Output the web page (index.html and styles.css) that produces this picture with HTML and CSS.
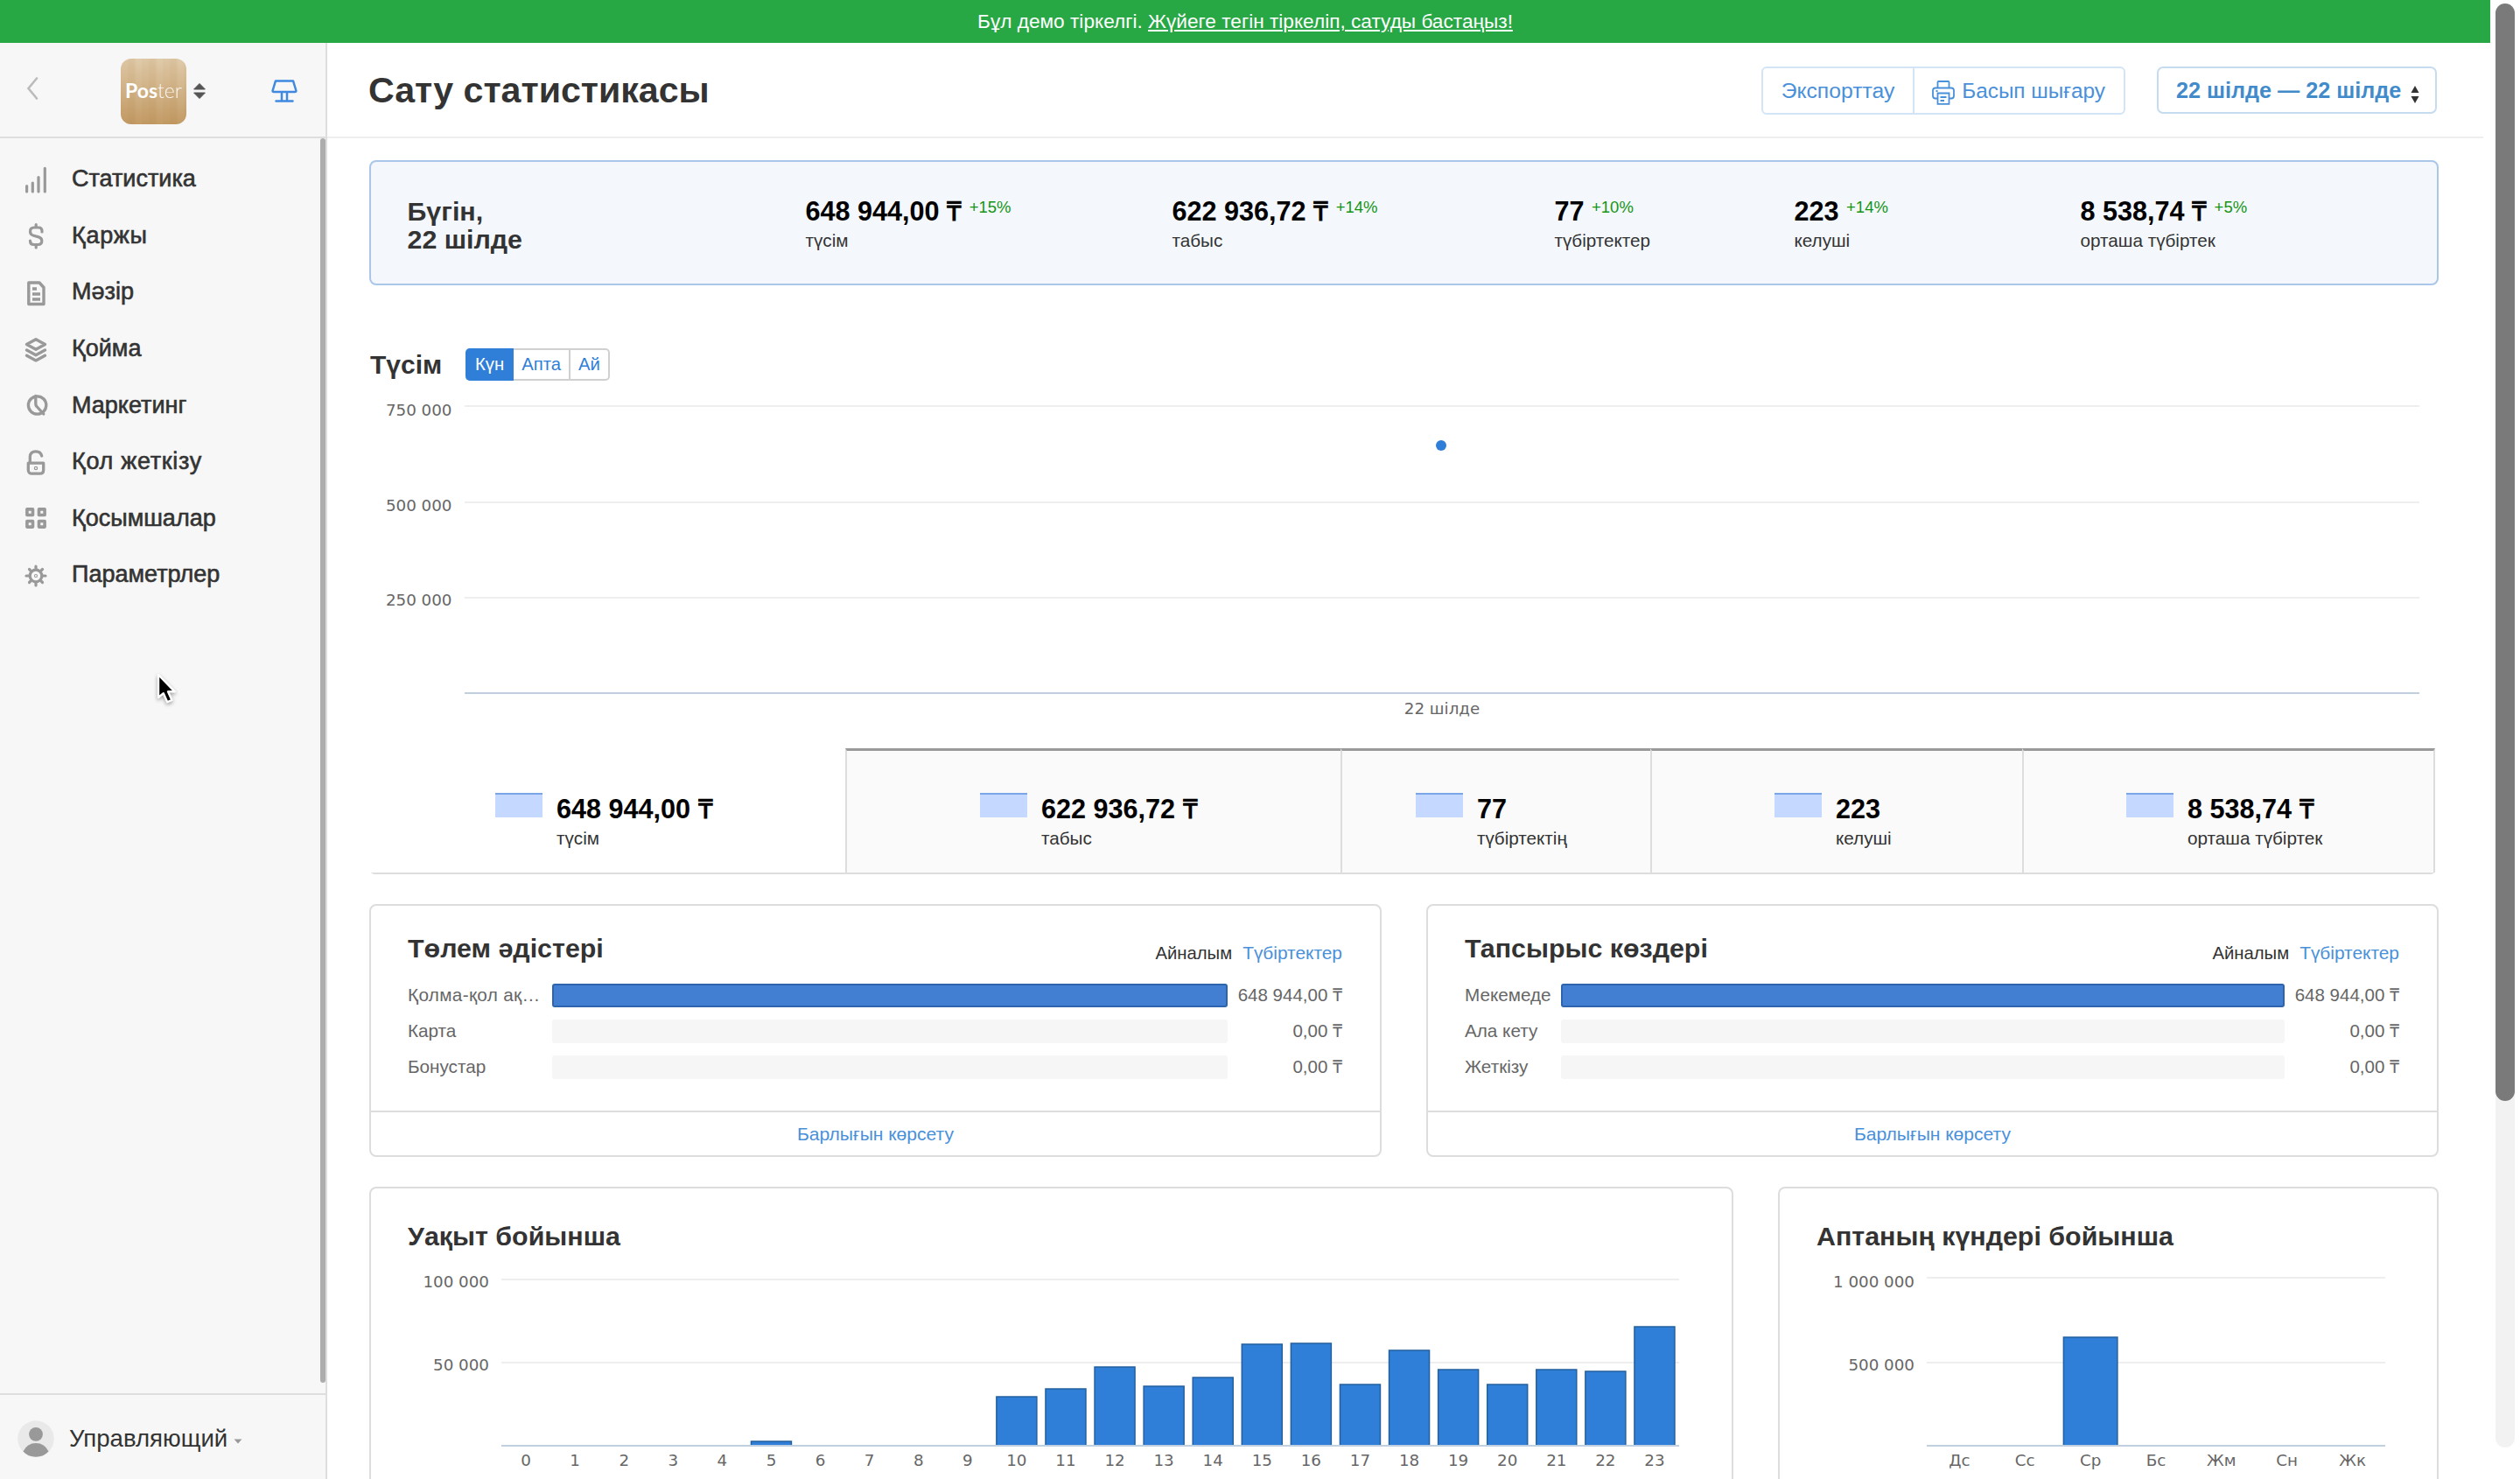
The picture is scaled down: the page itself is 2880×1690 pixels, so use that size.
FILE: index.html
```
<!DOCTYPE html>
<html lang="kk">
<head>
    <meta charset="UTF-8">
    <meta name="viewport" content="width=device-width, initial-scale=1.0">
    <title>Сату статистикасы</title>
    <link rel="stylesheet" href="styles.css">
</head>
<body>
    <div class="page">
        <!-- Demo banner -->
        <div class="demo-banner">Бұл демо тіркелгі. <a href="#">Жүйеге тегін тіркеліп, сатуды бастаңыз!</a></div>

        <div class="app">
            <!-- Sidebar -->
            <aside class="sidebar">
                <div class="sidebar-header">
                    <svg class="back" viewBox="0 0 14 26"><path d="M12 1.5 L2.5 13 L12 24.5" fill="none" stroke="#bbb" stroke-width="2.6" stroke-linecap="round"/></svg>
                    <div class="account">
                        <div class="logo"><b>Pos</b><span>ter</span></div>
                        <svg class="sorter" viewBox="0 0 14 18"><path d="M7 0.5 L13.4 7 H0.6 Z M7 17.5 L13.4 11 H0.6 Z" fill="#555" stroke="#555" stroke-width="1" stroke-linejoin="round"/></svg>
                    </div>
                    <svg class="pos-icon" viewBox="0 0 30 26" fill="none" stroke="#3f8ae0" stroke-width="2.5" stroke-linejoin="round" stroke-linecap="round">
                        <path d="M5 1.4 H25 L28.4 12.5 Q28.6 14 27 14 H3 Q1.4 14 1.6 12.5 Z"/>
                        <path d="M12 14.5 V24 M18 14.5 V24 M5.5 24.4 H24.5"/>
                    </svg>
                </div>

                <div class="sidebar-body">
                    <nav class="menu">
                        <a href="#" class="menu-item">
                            <svg viewBox="0 0 30 32" stroke-width="3.2" stroke-linecap="round"><path d="M4.6 23.5 V30 M11.3 20 V30 M18 13.5 V30 M25.3 3.3 V30"/></svg>
                            Статистика
                        </a>
                        <a href="#" class="menu-item wide">
                            <svg viewBox="0 0 30 32" stroke-width="3.2" stroke-linecap="round"><path d="M22 12 V11 Q22 7 18 7 H13 Q8.5 7 8.5 11.5 Q8.5 15.2 12.5 16.2 L17.5 17.6 Q21.8 18.8 21.8 22.3 Q21.8 26.5 17.5 26.5 H12.5 Q8.5 26.5 8.5 22.5 V22 M15.2 3.5 V6 M15.2 27 V30"/></svg>
                            Қаржы
                        </a>
                        <a href="#" class="menu-item">
                            <svg viewBox="0 0 30 32" stroke-width="3.4" stroke-linejoin="round"><path d="M6.8 5 H19 L24 10.5 V29.5 H6.8 Z M11 12 H16 M11 18 H20 M11 24 H20"/></svg>
                            Мәзір
                        </a>
                        <a href="#" class="menu-item">
                            <svg viewBox="0 0 30 32" stroke-width="3.4" stroke-linejoin="round" stroke-linecap="round"><path d="M15 4.8 L25.5 10.5 L15 16.2 L4.5 10.5 Z M4.5 17 L15 22.7 L25.5 17 M4.5 23.2 L15 28.9 L25.5 23.2"/></svg>
                            Қойма
                        </a>
                        <a href="#" class="menu-item">
                            <svg viewBox="0 0 30 32" stroke-width="3.3" stroke-linejoin="round" stroke-linecap="round"><circle cx="16.6" cy="16" r="10.2"/><path d="M14.8 5.5 V14.5 Q14.8 16.3 16 17.5 L23.8 26"/></svg>
                            Маркетинг
                        </a>
                        <a href="#" class="menu-item wide">
                            <svg viewBox="0 0 30 32" stroke-width="3.3" stroke-linejoin="round" stroke-linecap="round"><path d="M6.3 17.2 H23.7 V25 Q23.7 29.2 19.5 29.2 H10.5 Q6.3 29.2 6.3 25 Z M8.3 17 V10 Q8.3 3.8 15 3.8 Q20.5 3.8 21.7 9"/><circle cx="15" cy="23" r="0.6"/></svg>
                            Қол жеткізу
                        </a>
                        <a href="#" class="menu-item">
                            <svg viewBox="0 0 30 32" stroke-width="3.6" stroke-linejoin="round"><path d="M4.9 5.9 H11.5 V12.5 H4.9 Z M18.5 5.9 H25.1 V12.5 H18.5 Z M4.9 19.5 H11.5 V26.1 H4.9 Z M18.5 19.5 H25.1 V26.1 H18.5 Z"/></svg>
                            Қосымшалар
                        </a>
                        <a href="#" class="menu-item">
                            <svg viewBox="0 0 30 32" stroke-width="3.2" stroke-linecap="round"><circle cx="15" cy="17" r="6.8"/><circle cx="15" cy="17" r="0.5"/><path d="M15 9 V6 M15 25 V28 M7 17 H4 M23 17 H26 M9.3 11.3 L7.5 9.5 M20.7 11.3 L22.5 9.5 M9.3 22.7 L7.5 24.5 M20.7 22.7 L22.5 24.5"/></svg>
                            Параметрлер
                        </a>
                    </nav>
                    <div class="menu-scroll"></div>
                </div>

                <div class="user">
                    <svg class="avatar" viewBox="0 0 42 42"><circle cx="21" cy="21" r="20.7" fill="#e9e9e9"/><circle cx="21" cy="15.8" r="7.9" fill="#999"/><path d="M6.5 35.5 Q11 26 21 26 Q31 26 35.5 35.5 Q30 41.7 21 41.7 Q12 41.7 6.5 35.5 Z" fill="#999"/></svg>
                    <span>Управляющий</span>
                    <svg class="caret" viewBox="0 0 10 6"><path d="M0.5 0.5 H9.5 L5 5.5 Z" fill="#999"/></svg>
                </div>
            </aside>

            <main class="main">
                <!-- Top bar -->
                <header class="topbar">
                    <h1>Сату статистикасы</h1>
                    <div class="btn-group">
                        <a href="#" class="btn">Экспорттау</a>
                        <a href="#" class="btn btn-print">
                            <svg viewBox="0 0 26 28" fill="none" stroke="#4a90d9" stroke-width="1.8"><path d="M6.5 8.5 V2 Q6.5 1 7.5 1 H18.5 Q19.5 1 19.5 2 V8.5 M6 20.5 H4 Q1 20.5 1 17.5 V11.5 Q1 8.5 4 8.5 H22 Q25 8.5 25 11.5 V17.5 Q25 20.5 22 20.5 H20 M6.5 14.5 H19.5 V26.8 H6.5 Z M9.5 19 H16.5 M9.5 23 H14 M4.5 12 H6.5"/></svg>
                            Басып шығару
                        </a>
                    </div>
                    <a href="#" class="period">
                        22 шілде — 22 шілде
                        <svg viewBox="0 0 10 20"><path d="M5 0 L9.5 8 H0.5 Z M5 20 L9.5 12 H0.5 Z" fill="#333"/></svg>
                    </a>
                </header>

                <div class="content">
                    <!-- Today summary -->
                    <section class="summary">
                        <h2>Бүгін,<br>22 шілде</h2>
                        <div><b>648 944,00 ₸ <sup>+15%</sup></b><p>түсім</p></div>
                        <div><b>622 936,72 ₸ <sup>+14%</sup></b><p>табыс</p></div>
                        <div><b>77 <sup>+10%</sup></b><p>түбіртектер</p></div>
                        <div><b>223 <sup>+14%</sup></b><p>келуші</p></div>
                        <div><b>8 538,74 ₸ <sup>+5%</sup></b><p>орташа түбіртек</p></div>
                    </section>

                    <!-- Revenue chart -->
                    <div class="chart-header">
                        <h2>Түсім</h2>
                        <div class="switch">
                            <a href="#" class="active">Күн</a>
                            <a href="#">Апта</a>
                            <a href="#">Ай</a>
                        </div>
                    </div>
                    <svg class="chart chart-main" viewBox="0 0 2364 420">
                        <path class="grid" d="M109 29 H2343 M109 139 H2343 M109 248 H2343"/>
                        <path class="axis" d="M109 357 H2343"/>
                        <g text-anchor="end">
                            <text x="94.5" y="40">750 000</text>
                            <text x="94.5" y="149">500 000</text>
                            <text x="94.5" y="257">250 000</text>
                        </g>
                        <text x="1226" y="381" text-anchor="middle">22 шілде</text>
                        <circle cx="1225" cy="74" r="6" fill="#2f7ed8"/>
                    </svg>

                    <!-- Metric tabs -->
                    <section class="tabs">
                        <div class="tab active"><i></i><div><b>648 944,00 ₸</b><p>түсім</p></div></div>
                        <div class="tab"><i></i><div><b>622 936,72 ₸</b><p>табыс</p></div></div>
                        <div class="tab"><i></i><div><b>77</b><p>түбіртектің</p></div></div>
                        <div class="tab"><i></i><div><b>223</b><p>келуші</p></div></div>
                        <div class="tab"><i></i><div><b>8 538,74 ₸</b><p>орташа түбіртек</p></div></div>
                    </section>

                    <!-- Payment methods and order sources -->
                    <div class="row row-halves">
                        <section class="card payments">
                            <div class="card-header">
                                <h2>Төлем әдістері</h2>
                                <div class="card-links"><span>Айналым</span><a href="#">Түбіртектер</a></div>
                            </div>
                            <div class="bars">
                                <span class="cut">Қолма-қол ақ…</span><div class="bar full"></div><em>648 944,00 ₸</em>
                                <span>Карта</span><div class="bar"></div><em>0,00 ₸</em>
                                <span>Бонустар</span><div class="bar"></div><em>0,00 ₸</em>
                            </div>
                            <a href="#" class="card-footer">Барлығын көрсету</a>
                        </section>
                        <section class="card sources">
                            <div class="card-header">
                                <h2>Тапсырыс көздері</h2>
                                <div class="card-links"><span>Айналым</span><a href="#">Түбіртектер</a></div>
                            </div>
                            <div class="bars">
                                <span>Мекемеде</span><div class="bar full"></div><em>648 944,00 ₸</em>
                                <span>Ала кету</span><div class="bar"></div><em>0,00 ₸</em>
                                <span>Жеткізу</span><div class="bar"></div><em>0,00 ₸</em>
                            </div>
                            <a href="#" class="card-footer">Барлығын көрсету</a>
                        </section>
                    </div>

                    <!-- By hour and by weekday -->
                    <div class="row row-charts">
                        <section class="card">
                            <h2>Уақыт бойынша</h2>
                            <svg class="chart" id="hours" width="1470" height="270">
                                <path class="grid" d="M107 32 H1453 M107 127 H1453"/>
                                <text x="93" y="41" text-anchor="end">100 000</text>
                                <text x="93" y="136" text-anchor="end">50 000</text>
                            </svg>
                        </section>
                        <section class="card">
                            <h2>Аптаның күндері бойынша</h2>
                            <svg class="chart" id="days" width="660" height="270">
                                <path class="grid" d="M126 30 H650 M126 127 H650"/>
                                <text x="112" y="41" text-anchor="end">1 000 000</text>
                                <text x="112" y="136" text-anchor="end">500 000</text>
                            </svg>
                        </section>
                    </div>
                </div>
            </main>
        </div>
    </div>

    <div class="scrollbar"><div class="thumb"></div></div>

    <svg class="cursor" viewBox="0 0 28 40"><path d="M3 3 V29 L8.8 24.2 L13.2 34.2 L18.4 32 L14 22.3 H21.8 Z" fill="#000" stroke="#fff" stroke-width="2.4" stroke-linejoin="round"/></svg>

    <script>
        const SVG = "http://www.w3.org/2000/svg";

        function add(svg, tag, attrs, text) {
            const el = document.createElementNS(SVG, tag);
            for (const key in attrs) el.setAttribute(key, attrs[key]);
            if (text !== undefined) el.textContent = text;
            svg.appendChild(el);
        }

        // Draw columns, bottom axis and category labels
        function drawColumns(id, labels, heights, left, right, barWidth) {
            const svg = document.getElementById(id);
            const slot = (right - left) / labels.length;
            labels.forEach((label, i) => {
                const center = left + slot * (i + 0.5);
                if (heights[i]) {
                    add(svg, "rect", { class: "column", x: center - barWidth / 2 + 0.75, y: 222 - heights[i], width: barWidth - 1.5, height: heights[i] });
                }
                add(svg, "text", { x: center, y: 245, "text-anchor": "middle" }, label);
            });
            add(svg, "path", { class: "axis", d: "M" + left + " 222 H" + right });
        }

        drawColumns("hours", [...Array(24).keys()],
            [0, 0, 0, 0, 0, 5, 0, 0, 0, 0, 56, 65, 90, 68, 78, 116, 117, 70, 109, 87, 70, 87, 85, 136],
            107, 1453, 47.5);
        drawColumns("days", ["Дс", "Сс", "Ср", "Бс", "Жм", "Сн", "Жк"], [0, 0, 124, 0, 0, 0, 0], 126, 650, 63);
    </script>
</body>
</html>
```
FILE: styles.css
```
/* General */
* {
    box-sizing: border-box;
}

body {
    margin: 0;
    height: 1690px;
    display: flex;
    overflow: hidden;
    background: #fff;
    color: #333;
    font-family: "Liberation Sans", Arial, sans-serif;
    font-size: 20.7px;
}

a {
    color: #4a90d9;
    text-decoration: none;
}

h1, h2, p {
    margin: 0;
}

h2 {
    font-size: 30.4px;
    line-height: 36px;
}

.page {
    width: 2852px;
    flex: none;
}

/* Demo banner */
.demo-banner {
    width: 2846px;
    height: 49px;
    background: #28a745;
    color: #fff;
    font-size: 22.65px;
    line-height: 49px;
    text-align: center;
}

.demo-banner a {
    color: #fff;
    text-decoration: underline;
}

.app {
    display: flex;
    height: 1641px;
}

/* Sidebar */
.sidebar {
    width: 374px;
    flex: none;
    display: flex;
    flex-direction: column;
    background: #f7f7f7;
    border-right: 2px solid #dedede;
}

.sidebar-header {
    height: 109px;
    padding: 0 32px 0 30px;
    display: flex;
    align-items: center;
    justify-content: space-between;
    border-bottom: 2px solid #dedede;
}

.back {
    width: 14px;
    height: 26px;
    margin-top: -3px;
}

.account {
    display: flex;
    align-items: center;
    gap: 8px;
    margin-top: 3px;
    margin-right: -19px;
}

.logo {
    width: 75px;
    height: 75px;
    border-radius: 12px;
    background:
        linear-gradient(rgba(225, 206, 175, 0.75), rgba(190, 148, 92, 0.85)),
        repeating-linear-gradient(90deg, #d2b184 0 7px, #c6a171 9px 15px, #dcc29b 18px 24px);
    color: #fff;
    font-family: Lato, sans-serif;
    font-size: 23px;
    line-height: 72px;
    text-align: center;
}

.logo span {
    font-weight: 300;
    opacity: 0.9;
}

.sorter {
    width: 14px;
    height: 18px;
}

.pos-icon {
    width: 30px;
    height: 26px;
    margin-top: 3px;
}

.sidebar-body {
    flex: 1;
    display: flex;
}

.menu {
    flex: 1;
    padding: 14.5px 0 0 26px;
}

.menu-item {
    display: flex;
    align-items: center;
    gap: 26px;
    height: 64.6px;
    color: #333;
    font-size: 27px;
    -webkit-text-stroke: 0.6px #333;
}

.menu-item.wide {
    letter-spacing: 0.7px;
}

.menu-item svg {
    width: 30px;
    height: 32px;
    fill: none;
    stroke: #999;
}

.menu-scroll {
    width: 6px;
    margin-bottom: 12px;
    border-radius: 3px;
    background: #adadad;
}

.user {
    height: 98px;
    padding: 4px 0 0 20px;
    display: flex;
    align-items: center;
    border-top: 2px solid #dedede;
    font-size: 27.6px;
}

.avatar {
    width: 42px;
    height: 42px;
    margin-right: 17px;
}

.caret {
    width: 10px;
    height: 6px;
    margin: 5px 0 0 7px;
}

/* Top bar */
.main {
    width: 2478px;
}

.topbar {
    width: 2464px;
    height: 109px;
    padding: 0 53px 0 47px;
    display: flex;
    align-items: center;
    border-bottom: 2px solid #eee;
}

.topbar h1 {
    flex: 1;
    font-size: 41.15px;
    line-height: 48px;
}

.btn-group {
    display: flex;
    height: 55px;
    margin: 2px 36px 0 0;
    border: 2px solid #d3e4f6;
    border-radius: 6px;
}

.btn {
    padding: 0 20.5px;
    font-size: 24.7px;
    line-height: 52px;
}

.btn-print {
    display: flex;
    align-items: center;
    padding-right: 21px;
    border-left: 2px solid #d3e4f6;
    font-size: 24.3px;
}

.btn-print svg {
    width: 26px;
    height: 28px;
    margin-top: 4px;
    margin-right: 8px;
}

.period {
    display: flex;
    align-items: center;
    justify-content: space-between;
    width: 320px;
    height: 54px;
    padding: 1px 18px 0 20px;
    border: 2px solid #c5dcf0;
    border-radius: 7px;
    color: #428bca;
    font-size: 25.2px;
    font-weight: bold;
}

.period svg {
    width: 10px;
    height: 20px;
    margin-top: 9px;
}

.content {
    width: 2365px;
    margin: 25px 0 0 48px;
}

/* Today summary */
.summary {
    display: grid;
    grid-template-columns: 455px 419px 437px 274px 327px 1fr;
    height: 143px;
    padding: 40px 0 0 41.5px;
    border: 2px solid #aac6e8;
    border-radius: 8px;
    background: #f4f8fd;
}

.summary h2 {
    line-height: 32px;
}

.summary b,
.tab b {
    display: block;
    height: 32px;
    color: #000;
    font-size: 30.6px;
    line-height: 32px;
}

.summary sup {
    color: #149414;
    font-size: 18.5px;
    font-weight: normal;
    line-height: 18px;
    vertical-align: 9px;
}

.summary p,
.tab p {
    margin-top: 6px;
    line-height: 24px;
}

/* Revenue chart */
.chart-header {
    display: flex;
    height: 37px;
    margin-top: 72px;
    padding-left: 1px;
}

.chart-header h2 {
    width: 109px;
    font-size: 30px;
    line-height: 37px;
}

.switch {
    display: flex;
    border: 2px solid #d0d0d0;
    border-left: none;
    border-radius: 5px;
}

.switch a {
    padding: 0 9px;
    color: #2f7ed8;
    font-size: 20.3px;
    line-height: 33px;
}

.switch a + a + a {
    border-left: 2px solid #d0d0d0;
}

.switch .active {
    margin: -2px 0;
    padding: 0 11px;
    border-radius: 5px 0 0 5px;
    background: #2f7ed8;
    color: #fff;
    line-height: 37px;
}

.chart {
    display: block;
}

.chart-main {
    width: 2364px;
    height: 420px;
}

.chart text {
    fill: #666;
    font-family: "DejaVu Sans", sans-serif;
    font-size: 18.3px;
}

.grid {
    stroke: #eee;
    stroke-width: 2;
}

.axis {
    stroke: #c0d0e0;
    stroke-width: 2;
}

.column {
    fill: #2f7ed8;
    stroke: #23609f;
    stroke-width: 1.5;
}

/* Metric tabs */
.tabs {
    display: grid;
    grid-template-columns: 543px 566px 354px 425px 1fr;
    width: 2360px;
    height: 144px;
    margin-left: 1px;
    border-bottom: 2px solid #ddd;
    border-radius: 0 0 5px 5px;
}

.tab {
    display: flex;
    border-top: 3px solid #999;
    border-left: 2px solid #ddd;
    background: #fafafa;
}

.tab.active {
    border-color: transparent;
    background: #fff;
}

.tab:last-child {
    border-right: 2px solid #ddd;
}

.tab i {
    width: 54px;
    height: 28px;
    margin: 48px 16px 0 141px;
    border-top: 2px solid #7aa6e8;
    background: #c5d8ff;
}

.tab:nth-child(2) i {
    margin-left: 152px;
}

.tab:nth-child(3) i {
    margin-left: 84px;
}

.tab:nth-child(4) i {
    margin-left: 140px;
}

.tab:nth-child(5) i {
    margin-left: 117px;
}

.tab b {
    margin-top: 50px;
}

.tab p {
    margin-top: 6px;
}

/* Cards */
.row {
    display: grid;
    gap: 51px;
    margin-top: 34px;
}

.row-halves {
    grid-template-columns: 1157px 1157px;
}

.row-charts {
    grid-template-columns: 1559px 755px;
}

.card {
    border: 2px solid #ddd;
    border-radius: 8px;
}

.row-halves .card {
    height: 289px;
    padding-top: 30px;
    display: flex;
    flex-direction: column;
}

.row-charts .card {
    height: 380px;
    padding: 36px 0 0 42px;
}

.card-header {
    display: flex;
    justify-content: space-between;
    padding: 0 43px 0 42px;
}

.card-links {
    display: flex;
    gap: 12px;
    margin-top: 6px;
    line-height: 36px;
}

.card-links span {
    font-size: 20.3px;
}

.card-links a {
    font-size: 20.9px;
}

.bars {
    display: grid;
    grid-template-columns: 165px 772px 1fr;
    grid-auto-rows: 27px;
    row-gap: 14px;
    flex: 1;
    padding: 17px 43px 0 42px;
    color: #666;
    line-height: 26px;
}

.sources .bars {
    grid-template-columns: 110px 827px 1fr;
}

.cut {
    letter-spacing: 0.35px;
}

.bars em {
    font-size: 20.5px;
    font-style: normal;
    text-align: right;
}

.bar {
    border-radius: 3px;
    background: #f6f6f6;
}

.bar.full {
    border: 2px solid #2d64ab;
    background: #427fd3;
}

.card-footer {
    height: 51px;
    border-top: 2px solid #ddd;
    font-size: 21.1px;
    line-height: 50px;
    text-align: center;
}

/* Page scrollbar */
.scrollbar {
    width: 22px;
    height: 1650px;
    margin-top: 4px;
    border-radius: 11px;
    background: #f2f2f2;
}

.thumb {
    height: 1254px;
    border-radius: 11px;
    background: #7a7a7a;
}

.cursor {
    position: absolute;
    left: 178px;
    top: 768px;
    width: 28px;
    height: 40px;
    filter: drop-shadow(0 2px 2px rgba(0, 0, 0, 0.35));
}
```
